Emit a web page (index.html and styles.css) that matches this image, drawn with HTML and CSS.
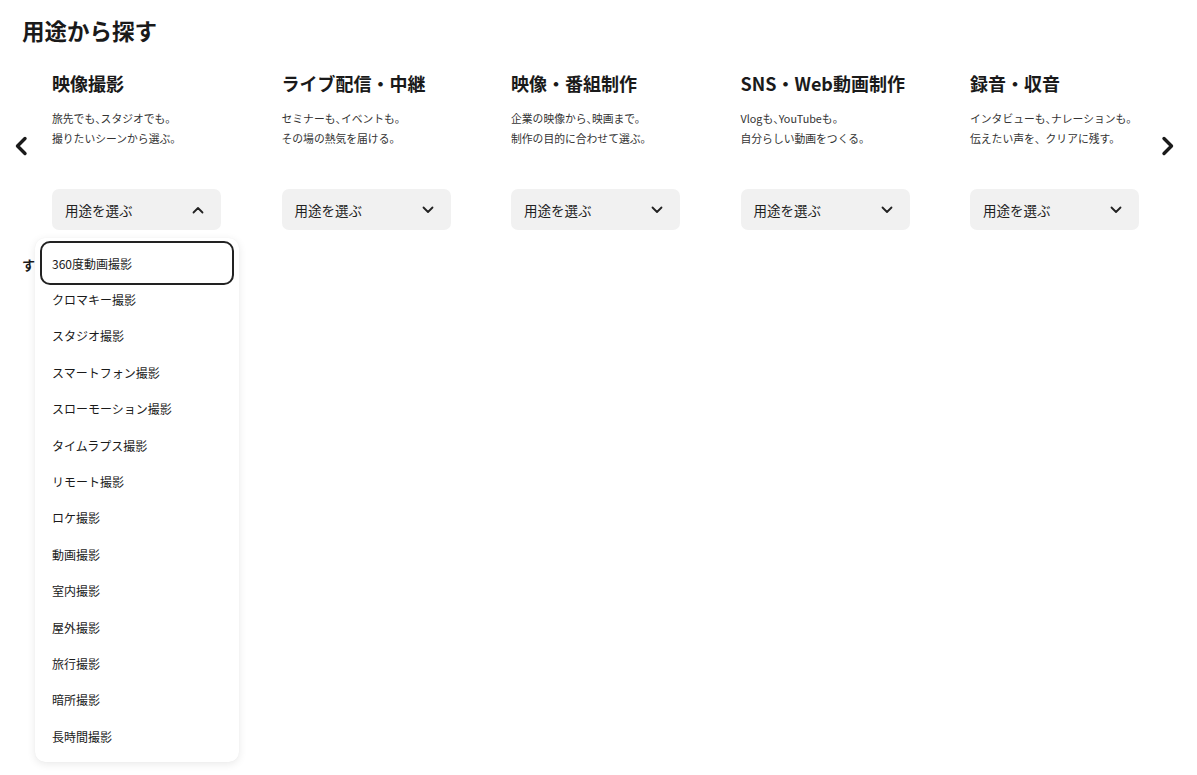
FILE: index.html
```html
<!DOCTYPE html>
<html lang="ja">
<head>
<meta charset="utf-8">
<title>用途から探す</title>
<link rel="stylesheet" href="styles.css">
</head>
<body>
<main class="page">
  <h2 class="section-title">用途から探す</h2>

  <div class="carousel">
    <button class="nav nav-prev" aria-label="前へ">
      <svg viewBox="0 0 16 20" width="16" height="20"><path d="M12 2.5 L4.5 10 L12 17.5" fill="none" stroke="#1a1a1a" stroke-width="3.4" stroke-linecap="round" stroke-linejoin="round"/></svg>
    </button>

    <div class="track">
      <section class="card">
        <h3 class="card-title">映像撮影</h3>
        <p class="card-desc">旅先でも<span class="punct">、</span>スタジオでも。<br>撮りたいシーンから選ぶ。</p>
        <div class="picker">
          <button class="select is-open">
            <span>用途を選ぶ</span>
            <svg class="chev" viewBox="0 0 12 8" width="12" height="8"><path d="M1.5 6.5 L6 2 L10.5 6.5" fill="none" stroke="#222" stroke-width="1.8" stroke-linecap="round" stroke-linejoin="round"/></svg>
          </button>
          <ul class="menu">
            <li class="menu-item is-focused">360度動画撮影</li>
            <li class="menu-item">クロマキー撮影</li>
            <li class="menu-item">スタジオ撮影</li>
            <li class="menu-item">スマートフォン撮影</li>
            <li class="menu-item">スローモーション撮影</li>
            <li class="menu-item">タイムラプス撮影</li>
            <li class="menu-item">リモート撮影</li>
            <li class="menu-item">ロケ撮影</li>
            <li class="menu-item">動画撮影</li>
            <li class="menu-item">室内撮影</li>
            <li class="menu-item">屋外撮影</li>
            <li class="menu-item">旅行撮影</li>
            <li class="menu-item">暗所撮影</li>
            <li class="menu-item">長時間撮影</li>
          </ul>
        </div>
      </section>

      <section class="card">
        <h3 class="card-title">ライブ配信・中継</h3>
        <p class="card-desc">セミナーも<span class="punct">、</span>イベントも。<br>その場の熱気を届ける。</p>
        <div class="picker">
          <button class="select">
            <span>用途を選ぶ</span>
            <svg class="chev" viewBox="0 0 12 8" width="12" height="8"><path d="M1.5 1.5 L6 6 L10.5 1.5" fill="none" stroke="#222" stroke-width="1.8" stroke-linecap="round" stroke-linejoin="round"/></svg>
          </button>
        </div>
      </section>

      <section class="card">
        <h3 class="card-title">映像・番組制作</h3>
        <p class="card-desc">企業の映像から<span class="punct">、</span>映画まで。<br>制作の目的に合わせて選ぶ。</p>
        <div class="picker">
          <button class="select">
            <span>用途を選ぶ</span>
            <svg class="chev" viewBox="0 0 12 8" width="12" height="8"><path d="M1.5 1.5 L6 6 L10.5 1.5" fill="none" stroke="#222" stroke-width="1.8" stroke-linecap="round" stroke-linejoin="round"/></svg>
          </button>
        </div>
      </section>

      <section class="card">
        <h3 class="card-title">SNS・Web動画制作</h3>
        <p class="card-desc">Vlogも<span class="punct">、</span>YouTubeも。<br>自分らしい動画をつくる。</p>
        <div class="picker">
          <button class="select">
            <span>用途を選ぶ</span>
            <svg class="chev" viewBox="0 0 12 8" width="12" height="8"><path d="M1.5 1.5 L6 6 L10.5 1.5" fill="none" stroke="#222" stroke-width="1.8" stroke-linecap="round" stroke-linejoin="round"/></svg>
          </button>
        </div>
      </section>

      <section class="card">
        <h3 class="card-title">録音・収音</h3>
        <p class="card-desc">インタビューも<span class="punct">、</span>ナレーションも。<br>伝えたい声を、クリアに残す。</p>
        <div class="picker">
          <button class="select">
            <span>用途を選ぶ</span>
            <svg class="chev" viewBox="0 0 12 8" width="12" height="8"><path d="M1.5 1.5 L6 6 L10.5 1.5" fill="none" stroke="#222" stroke-width="1.8" stroke-linecap="round" stroke-linejoin="round"/></svg>
          </button>
        </div>
      </section>
    </div>

    <button class="nav nav-next" aria-label="次へ">
      <svg viewBox="0 0 16 20" width="16" height="20"><path d="M4 2.5 L11.5 10 L4 17.5" fill="none" stroke="#1a1a1a" stroke-width="3.4" stroke-linecap="round" stroke-linejoin="round"/></svg>
    </button>
  </div>

  <p class="next-heading">す</p>
</main>
</body>
</html>
```

FILE: styles.css
```css
* {
  box-sizing: border-box;
}

html, body {
  margin: 0;
  padding: 0;
  background: #fff;
}

body {
  min-height: 100vh;
  font-family: "Noto Sans CJK JP", "Noto Sans", sans-serif;
  color: #1a1a1a;
}

.page {
  min-height: 775px;
  padding-top: 14px;
}

.section-title {
  margin: 0;
  padding-left: 22px;
  font-size: 22.5px;
  line-height: 32px;
  font-weight: 700;
  color: #1a1a1a;
}

/* carousel row: prev arrow, card track, next arrow */
.carousel {
  display: flex;
  align-items: flex-start;
  margin-top: 24px;
  padding-left: 12px;
}

.nav {
  flex: none;
  width: 18px;
  height: 22px;
  margin-top: 65px;
  padding: 0;
  border: 0;
  background: none;
  display: flex;
  align-items: center;
  justify-content: center;
  cursor: pointer;
}

.nav-prev {
  margin-right: 22px;
}

.nav-next {
  margin-left: 20px;
}

.track {
  display: flex;
  gap: 60.5px;
}

.card {
  width: 169px;
  flex: none;
}

.card-title {
  margin: 0;
  font-size: 18px;
  line-height: 26px;
  font-weight: 700;
  white-space: nowrap;
  color: #1a1a1a;
}

.card-desc {
  margin: 12px 0 0;
  font-size: 10.8px;
  line-height: 20px;
  color: #333;
  white-space: nowrap;
}

/* half-width comma between phrases */
.punct {
  font-feature-settings: "halt";
}

.picker {
  position: relative;
  margin-top: 41px;
}

.select {
  width: 100%;
  height: 41px;
  display: flex;
  align-items: center;
  justify-content: space-between;
  padding: 0 17px 0 13px;
  border: 0;
  border-radius: 7px;
  background: #f1f1f1;
  font-family: inherit;
  font-size: 13.5px;
  color: #222;
  cursor: pointer;
}

.chev {
  display: block;
}

/* open option list under the first picker */
.menu {
  position: absolute;
  top: 49px;
  left: -17px;
  width: 204px;
  margin: 0;
  padding: 7px 0 8px;
  list-style: none;
  background: #fff;
  border-radius: 10px;
  box-shadow: 0 2px 8px rgba(0, 0, 0, 0.09), 0 0 1px rgba(0, 0, 0, 0.06);
  z-index: 10;
}

.menu-item {
  height: 36.4px;
  margin: 0 7px;
  padding-left: 10px;
  display: flex;
  align-items: center;
  font-size: 12px;
  color: #1a1a1a;
  border-radius: 8px;
}

.menu-item.is-focused {
  outline: 2px solid #222;
  outline-offset: 0;
  margin-top: -2px;
  height: 40px;
  margin-bottom: -1.6px;
}

.next-heading {
  margin: 25px 0 0;
  padding-left: 22px;
  font-size: 13px;
  line-height: 20px;
  font-weight: 700;
  color: #1a1a1a;
}
```
